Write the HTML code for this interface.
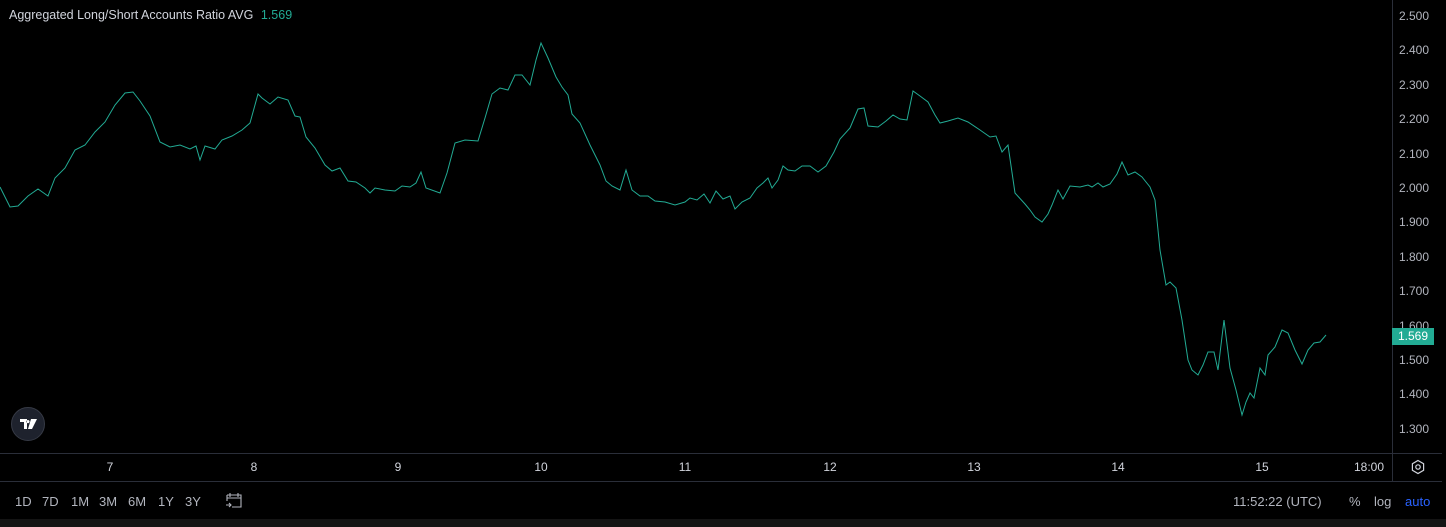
<!DOCTYPE html>
<html><head><meta charset="utf-8"><style>
body{margin:0;background:#000;width:1446px;height:527px;overflow:hidden;font-family:"Liberation Sans",sans-serif;position:relative}
.t{position:absolute;color:#d1d4dc;font-size:12px;white-space:nowrap}
.y{position:absolute;left:1399px;color:#b2b5be;font-size:12px}
.x{position:absolute;top:460px;color:#d1d4dc;font-size:12px;transform:translateX(-50%)}
.b{position:absolute;top:494px;color:#b2b5be;font-size:13px}
</style></head><body>
<div class="t" style="left:9px;top:8px;font-size:12.5px">Aggregated Long/Short Accounts Ratio AVG <span style="color:#22ab94;margin-left:4px">1.569</span></div>
<div style="position:absolute;left:1392px;top:0;width:1px;height:481px;background:#2a2e39"></div>
<div style="position:absolute;left:0;top:453px;width:1442px;height:1px;background:#2a2e39"></div>
<div style="position:absolute;left:0;top:481px;width:1442px;height:1px;background:#2a2e39"></div>
<div style="position:absolute;left:0;top:519px;width:1446px;height:8px;background:#141414"></div>
<div class="y" style="top:9px">2.500</div><div class="y" style="top:43px">2.400</div><div class="y" style="top:78px">2.300</div><div class="y" style="top:112px">2.200</div><div class="y" style="top:147px">2.100</div><div class="y" style="top:181px">2.000</div><div class="y" style="top:215px">1.900</div><div class="y" style="top:250px">1.800</div><div class="y" style="top:284px">1.700</div><div class="y" style="top:319px">1.600</div><div class="y" style="top:353px">1.500</div><div class="y" style="top:387px">1.400</div><div class="y" style="top:422px">1.300</div>
<div style="position:absolute;left:1392px;top:328px;width:42px;height:17px;background:#22ab94;color:#fff;font-size:12px;line-height:17px;text-align:center">1.569</div>
<svg style="position:absolute;left:0;top:0" width="1392" height="453"><polyline fill="none" stroke="#22ab94" stroke-width="1" points="0,187 10,207 18,206 28,196 38,189 48,196 55,178 65,168 75,150 85,145 95,132 105,122 115,105 125,93 133,92 140,101 150,116 160,142 170,147 180,145 190,149 196,146 200,160 205,146 215,149 222,140 232,136 242,130 250,123 258,94 262,98 270,104 278,97 288,100 295,116 300,117 306,137 315,148 325,165 332,171 340,168 348,181 356,182 365,188 370,193 375,188 385,190 395,191 402,186 410,187 416,183 421,172 426,188 440,193 447,173 455,143 465,140 478,141 485,118 492,94 500,88 508,90 515,75 522,75 530,85 536,60 541,43 548,58 556,77 562,87 568,95 572,114 580,123 590,145 600,165 606,181 612,186 620,190 626,170 632,190 640,196 648,196 655,201 665,202 675,205 685,202 690,198 697,200 704,194 710,203 716,191 723,199 730,196 735,209 742,202 750,198 757,188 763,183 768,178 772,188 778,180 783,166 788,170 795,171 802,166 810,166 818,172 826,166 834,152 840,139 850,128 858,109 864,108 868,126 878,127 886,121 893,115 900,119 907,120 913,91 920,96 928,102 935,115 940,123 948,121 958,118 968,122 980,130 990,137 996,136 1002,152 1008,145 1015,193 1025,204 1030,210 1035,217 1042,222 1048,214 1052,205 1058,190 1063,199 1070,186 1080,187 1088,185 1092,187 1098,183 1103,187 1110,184 1117,174 1122,162 1128,175 1135,172 1142,177 1150,187 1155,200 1160,250 1166,285 1170,282 1176,288 1182,320 1188,360 1192,370 1198,375 1203,365 1208,352 1214,352 1218,370 1224,320 1230,368 1236,390 1242,415 1246,402 1250,393 1254,398 1260,368 1265,375 1268,355 1275,347 1282,330 1288,333 1295,350 1302,364 1308,350 1314,343 1320,342 1326,335"/></svg>
<div style="position:absolute;left:11px;top:407px;width:34px;height:34px;border-radius:50%;background:#1e222d;border:1px solid #363a45;box-sizing:border-box"></div>
<svg style="position:absolute;left:18px;top:416px" width="22" height="16"><path d="M2 3h7v10H6V6H2z M10 4a1.6 1.6 0 1 0 0.01 0z M13 3h6l-5 10h-4z" fill="#fff"/></svg>
<div class="x" style="left:110px">7</div><div class="x" style="left:254px">8</div><div class="x" style="left:398px">9</div><div class="x" style="left:541px">10</div><div class="x" style="left:685px">11</div><div class="x" style="left:830px">12</div><div class="x" style="left:974px">13</div><div class="x" style="left:1118px">14</div><div class="x" style="left:1262px">15</div><div class="x" style="left:1369px">18:00</div>
<svg style="position:absolute;left:1410px;top:459px" width="16" height="16"><path d="M8 1.5L13.6 4.75V11.25L8 14.5L2.4 11.25V4.75Z" fill="none" stroke="#d1d4dc" stroke-width="1.2"/><circle cx="8" cy="8" r="2.2" fill="none" stroke="#d1d4dc" stroke-width="1.2"/></svg>
<div class="b" style="left:15px">1D</div><div class="b" style="left:42px">7D</div><div class="b" style="left:71px">1M</div><div class="b" style="left:99px">3M</div><div class="b" style="left:128px">6M</div><div class="b" style="left:158px">1Y</div><div class="b" style="left:185px">3Y</div>
<svg style="position:absolute;left:224px;top:490px" width="20" height="20"><path d="M3 5h14v12H8 M3 5v6 M3 8h14 M6 3v4 M14 3v4 M2 15h5 M5 13l2 2-2 2" fill="none" stroke="#b2b5be" stroke-width="1.1"/></svg>
<div class="b" style="left:1233px">11:52:22 (UTC)</div>
<div class="b" style="left:1349px">%</div><div class="b" style="left:1374px">log</div><div class="b" style="left:1405px;color:#2962ff">auto</div>
</body></html>
